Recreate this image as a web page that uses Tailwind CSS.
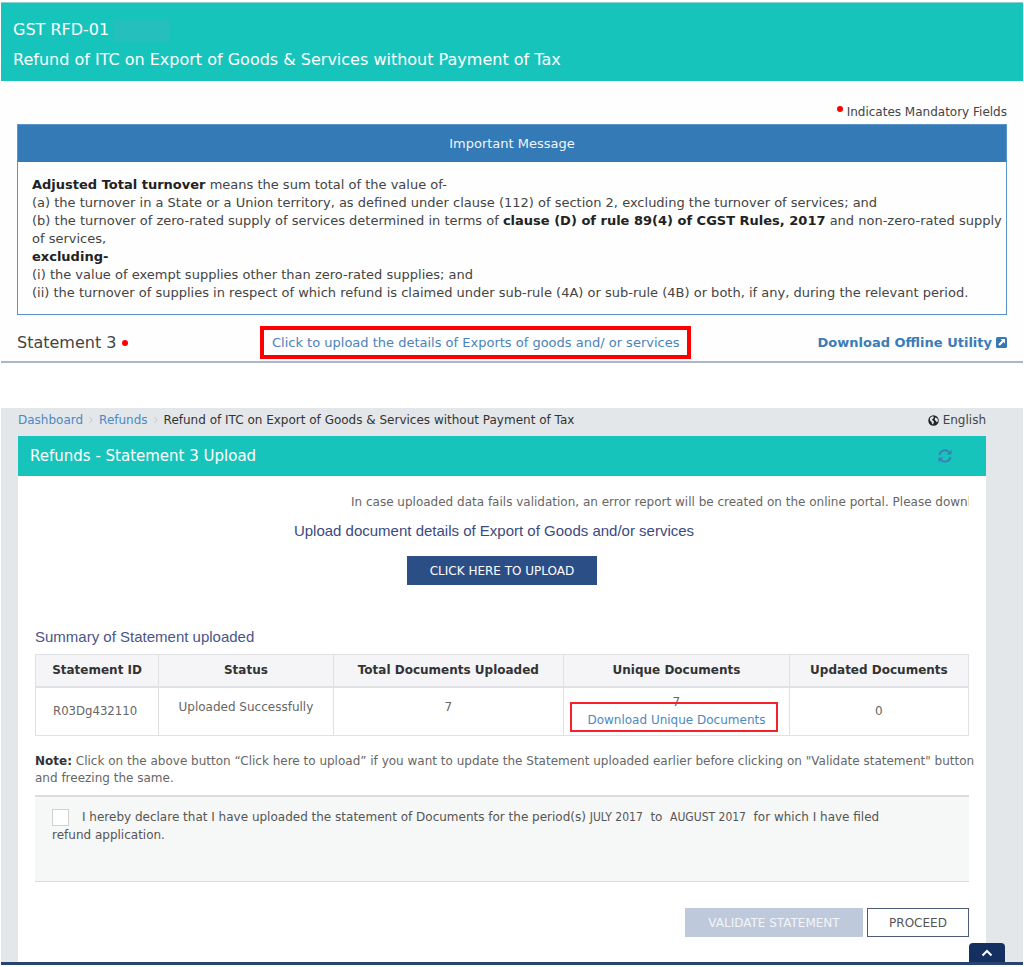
<!DOCTYPE html>
<html lang="en">
<head>
  <meta charset="UTF-8" />
  <meta name="viewport" content="width=device-width, initial-scale=1.0"/>
  <title>GST RFD-01 - Refunds</title>
  <script src="https://cdn.jsdelivr.net/npm/@tailwindcss/browser@4"></script>
</head>
<body class="bg-white px-px pt-[2px] font-['DejaVu_Sans',Verdana,sans-serif] text-[12px] leading-[18px] text-[#444]">

  <!-- APPLICATION FORM -->
  <section class="border-b-2 border-[#a9b7cd] bg-[#fefefe] text-[13px]">
    <header class="border-t border-[#8fcfd0] bg-[#17c4bb] px-3 pt-[12px] pb-[6px] text-[16px] leading-[30px] text-white">
      <h1 class="flex items-center gap-1">GST RFD-01<span class="h-[23px] w-[56px] bg-[#24bfbe]"></span></h1>
      <p>Refund of ITC on Export of Goods &amp; Services without Payment of Tax</p>
    </header>

    <div class="px-4">
      <p class="flex justify-end gap-1 pt-[22px] pb-[3px] text-[12px]">
        <span class="mt-[3px] size-[6px] rounded-full bg-[#fe0000]"></span>Indicates Mandatory Fields
      </p>

      <div class="border border-[#5b94c8]">
        <h2 class="bg-[#337ab7] py-[10px] text-center leading-[17px] text-[#f0f5fa]">Important Message</h2>
        <div class="pt-[14px] pr-1 pb-[12px] pl-[14px]">
          <p><b class="text-[#222]">Adjusted Total turnover</b> means the sum total of the value of-</p>
          <p>(a) the turnover in a State or a Union territory, as defined under clause (112) of section 2, excluding the turnover of services; and</p>
          <p>(b) the turnover of zero-rated supply of services determined in terms of <b class="text-[#222]">clause (D) of rule 89(4) of CGST Rules, 2017</b> and non-zero-rated supply of services,</p>
          <p><b class="text-[#222]">excluding-</b></p>
          <p>(i) the value of exempt supplies other than zero-rated supplies; and</p>
          <p>(ii) the turnover of supplies in respect of which refund is claimed under sub-rule (4A) or sub-rule (4B) or both, if any, during the relevant period.</p>
        </div>
      </div>

      <div class="flex items-center pt-[11px] pb-[2px]">
        <h3 class="flex w-[243px] items-center gap-[6px] text-[16px]">Statement 3 <span class="size-[6px] rounded-full bg-[#fe0000]"></span></h3>
        <a href="#upload" class="border-4 border-[#fe0000] px-2 py-[4px] leading-[17px] text-[#4a83bb]">Click to upload the details of Exports of goods and/ or services</a>
        <a href="#utility" class="ml-auto flex items-center gap-1 font-bold text-[#3b7cb8]">Download Offline Utility
          <svg class="size-[11px]" viewBox="0 0 12 12"><rect width="12" height="12" rx="2" fill="#337ab7"/><path d="M5 2.200h4.800V7L8.200 5.400 4.200 9.600 2.500 7.900l4.100-4.100z" fill="#fff"/></svg>
        </a>
      </div>
    </div>
  </section>

  <!-- STATEMENT 3 UPLOAD -->
  <section id="upload" class="relative mt-[45px] border-b-3 border-[#27446f] bg-[#e3e7ea] pr-[37px] pl-[17px]">
    <div class="flex justify-between pt-[3px] pb-[7px]">
      <nav class="flex items-center">
        <a href="#dashboard" class="text-[#4d88c2]">Dashboard</a>
        <svg class="mx-[6px] h-2 w-1" viewBox="0 0 4 8" fill="none" stroke="#c3c8cc"><path d="M.5 1 3 4 .5 7"/></svg>
        <a href="#refunds" class="text-[#4d88c2]">Refunds</a>
        <svg class="mx-[6px] h-2 w-1" viewBox="0 0 4 8" fill="none" stroke="#c3c8cc"><path d="M.5 1 3 4 .5 7"/></svg>
        <span class="text-[#333]">Refund of ITC on Export of Goods &amp; Services without Payment of Tax</span>
      </nav>
      <button type="button" class="flex items-center gap-1">
        <svg class="size-[11px]" viewBox="0 0 12 12"><circle cx="6" cy="6" r="5.700" fill="#222"/><path d="M2 3.500 4.500 1.300 6.500 2 5.800 3.800 4.200 5 5.500 6.200 6.600 7.400 5.400 10.600 4.300 9.200 3.800 7.400 2.200 6zM7.800 2.600 10 3.500l1 2.500-1.200 2.200L8.600 6.500 7.300 5.300z" fill="#e3e7ea"/></svg>
        English
      </button>
    </div>

    <div class="flex h-10 items-center justify-between bg-[#17c4bb] pr-[34px] pl-3 text-white">
      <h2 class="text-[15px]">Refunds - Statement 3 Upload</h2>
      <button type="button" aria-label="Refresh">
        <svg class="size-[14px]" viewBox="0 0 14 14" fill="none" stroke="#3a80b8" stroke-width="2"><path d="M1.500 6A5.500 5.500 0 0 1 11 3.200M12.500 8A5.500 5.500 0 0 1 3 10.800"/><path d="M13.500.5v5h-5zM.5 13.500v-5h5z" fill="#3a80b8" stroke="none"/></svg>
      </button>
    </div>

    <div class="bg-white px-[17px] pt-[17px] pb-[25px]">
      <p class="ml-[316px] overflow-hidden whitespace-nowrap text-[#666]">In case uploaded data fails validation, an error report will be created on the online portal. Please downl</p>
      <h3 class="pt-[10px] pr-4 text-center font-['Liberation_Sans',Arial,sans-serif] text-[15px] leading-[20px] text-[#3c4a80]">Upload document details of Export of Goods and/or services</h3>
      <div class="flex justify-center pt-[15px]">
        <button type="button" class="h-[29px] w-[190px] bg-[#2c4e86] text-white">CLICK HERE TO UPLOAD</button>
      </div>

      <h3 class="pt-[42px] pb-[7px] font-['Liberation_Sans',Arial,sans-serif] text-[15px] leading-[20px] text-[#4a5689]">Summary of Statement uploaded</h3>
      <table class="w-full table-fixed border-collapse text-center text-[#666]">
        <thead class="bg-[#f5f5f7] text-[#333]">
          <tr class="h-8">
            <th class="w-[13.200%] border border-b-2 border-[#dfe1e4]">Statement ID</th>
            <th class="w-[18.700%] border border-b-2 border-[#dfe1e4]">Status</th>
            <th class="w-[24.700%] border border-b-2 border-[#dfe1e4]">Total Documents Uploaded</th>
            <th class="w-[24.200%] border border-b-2 border-[#dfe1e4]">Unique Documents</th>
            <th class="border border-b-2 border-[#dfe1e4]">Updated Documents</th>
          </tr>
        </thead>
        <tbody>
          <tr class="h-[49px]">
            <td class="border border-[#dfe1e4] pr-1 font-['DejaVu_Sans_Condensed',Tahoma,sans-serif] text-[13px]">R03Dg432110</td>
            <td class="border border-[#dfe1e4] pb-2">Uploaded Successfully</td>
            <td class="border border-[#dfe1e4] pb-2">7</td>
            <td class="relative border border-[#dfe1e4]">
              7<br><a href="#unique" class="text-[#4d88c2]">Download Unique Documents</a>
              <span class="pointer-events-none absolute top-[14px] right-[11px] left-[6px] h-[30px] border-2 border-[#f5222b]"></span>
            </td>
            <td class="border border-[#dfe1e4]">0</td>
          </tr>
        </tbody>
      </table>

      <p class="-mr-3 pt-[17px] leading-[17px] text-[#666]"><b class="text-[#333]">Note:</b> Click on the above button “Click here to upload” if you want to update the Statement uploaded earlier before clicking on "Validate statement" button and freezing the same.</p>

      <div class="mt-[8px] border-t-2 border-b border-[#dcdcdc] bg-[#f6f7f7] px-[17px] pt-[11px] pb-[37px]">
        <input id="declare" type="checkbox" class="float-left mt-px mr-[13px] size-[17px] appearance-none border border-[#d0d0d0] bg-white">
        <label for="declare" class="text-[#555]">I hereby declare that I have uploaded the statement of Documents for the period(s) <span class="font-['DejaVu_Sans_Condensed',Tahoma,sans-serif]">JULY 2017</span>&nbsp; to&nbsp; <span class="font-['DejaVu_Sans_Condensed',Tahoma,sans-serif]">AUGUST 2017</span>&nbsp; for which I have filed<br>refund application.</label>
      </div>

      <div class="flex justify-end gap-1 pt-[26px]">
        <button type="button" disabled class="h-[29px] w-[178px] bg-[#bfc9dc] text-[#f2f5f9]">VALIDATE STATEMENT</button>
        <button type="button" class="h-[29px] w-[102px] border border-[#4b5b7a] bg-white text-[#555]">PROCEED</button>
      </div>
    </div>

    <button type="button" aria-label="Back to top" class="absolute right-[18px] bottom-0 flex h-[19px] w-9 items-center justify-center rounded-t-sm bg-[#143060]">
      <svg class="h-2 w-3" viewBox="0 0 12 8" fill="none" stroke="#fff" stroke-width="2"><path d="m1.500 6.500 4.500-4.500 4.500 4.500"/></svg>
    </button>
  </section>

</body>
</html>
